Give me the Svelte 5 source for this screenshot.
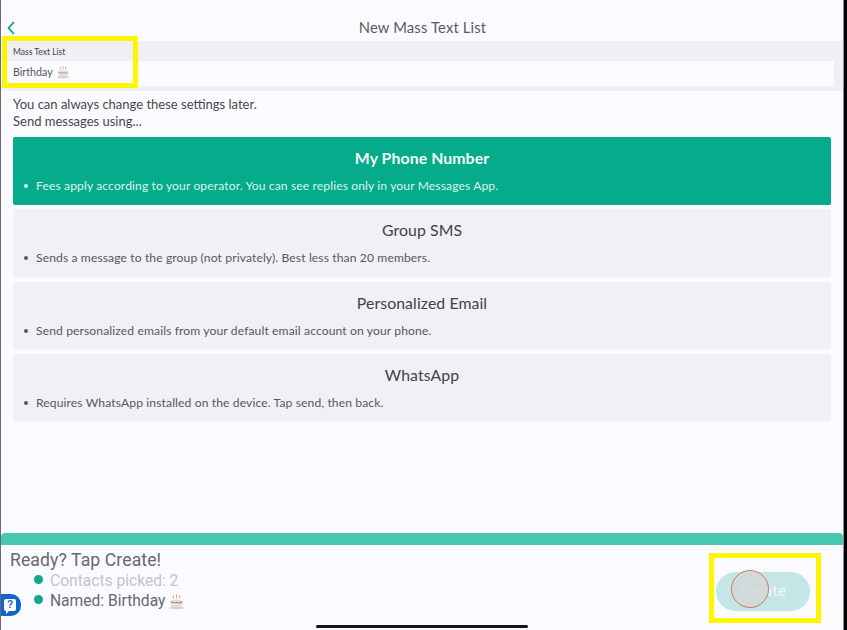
<script>
	const options = [
		{ title: 'My Phone Number', text: 'Fees apply according to your operator. You can see replies only in your Messages App.', active: true },
		{ title: 'Group SMS', text: 'Sends a message to the group (not privately). Best less than 20 members.', active: false },
		{ title: 'Personalized Email', text: 'Send personalized emails from your default email account on your phone.', active: false },
		{ title: 'WhatsApp', text: 'Requires WhatsApp installed on the device. Tap send, then back.', active: false }
	];
</script>

{#snippet cake(size)}
	<svg class="cake" width={size} height={size} viewBox="0 0 16 16" aria-hidden="true">
		<path d="M5 2v3M8 1.5V5M11 2v3" stroke="#b9a9a6" stroke-width="1" />
		<path d="M2.5 7.5c0-2 11-2 11 0V13c0 1.6-11 1.6-11 0z" fill="#eadfdc" />
		<path d="M2.5 8c1.5 2 2.5 0 3.7 1s2.2-1 3.4 0 2.4 0 3.9-1" fill="none" stroke="#a4817a" stroke-width="1" />
		<ellipse cx="8" cy="14" rx="7" ry="1.3" fill="#d6d0d4" />
	</svg>
{/snippet}

<div class="screen">
	<header class="topbar">
		<svg class="back" width="10" height="16" viewBox="0 0 10 16" aria-hidden="true">
			<path d="M8 2 2.5 8 8 14" fill="none" stroke="#0b9c84" stroke-width="1.7" />
		</svg>
		<h1>New Mass Text List</h1>
	</header>

	<div class="field">
		<div class="field-label">Mass Text List</div>
		<div class="field-input">Birthday {@render cake(14)}</div>
	</div>

	<p class="intro">You can always change these settings later.<br />Send messages using...</p>

	<div class="options">
		{#each options as option}
			<div class="option" class:active={option.active}>
				<div class="option-title">{option.title}</div>
				<div class="option-text"><span class="bullet"></span>{option.text}</div>
			</div>
		{/each}
	</div>

	<footer class="footer">
		<div class="footer-bar"></div>
		<div class="footer-body">
			<div class="summary">
				<div class="ready">Ready? Tap Create!</div>
				<div class="check done"><span class="dot"></span>Contacts picked: 2</div>
				<div class="check"><span class="dot"></span>Named: Birthday {@render cake(17)}</div>
			</div>
			<div class="create">Create</div>
		</div>
		<div class="home-indicator"></div>
	</footer>

	<div class="help"><span class="bubble">?</span></div>
	<div class="highlight highlight-name"></div>
	<div class="highlight highlight-create"></div>
	<div class="touch"></div>
</div>

<style>
	:global(body) {
		margin: 0;
		background: #fbfbff;
	}

	.screen {
		position: relative;
		display: flex;
		flex-direction: column;
		width: 847px;
		height: 630px;
		box-sizing: border-box;
		padding: 0 4px 0 1px;
		overflow: hidden;
		background: #fbfbff;
		border-left: 1px solid #6a6a70;
		box-shadow: inset -3px 0 0 #000, inset -4px 0 0 #8c8c92;
		font-family: Lato, 'Open Sans', sans-serif;
		color: #4d5257;
	}

	.topbar {
		display: flex;
		align-items: center;
		justify-content: center;
		position: relative;
		height: 41px;
		flex-shrink: 0;
		padding-top: 13px;
		box-sizing: border-box;
	}

	.topbar h1 {
		margin: 0;
		font-size: 14.8px;
		font-weight: 400;
		color: #565c60;
		letter-spacing: 0.15px;
	}

	.back {
		position: absolute;
		left: 4px;
		top: 20px;
	}

	.field {
		background: #f0f0f4;
		padding-bottom: 5px;
		margin-left: -1px;
	}

	.field-label {
		height: 20px;
		line-height: 22px;
		padding-left: 12px;
		font-size: 8.5px;
		color: #3f4347;
	}

	.field-input {
		display: flex;
		align-items: center;
		gap: 0;
		height: 25px;
		padding: 0 0 4px 12px;
		box-sizing: border-box;
		margin-right: 9px;
		background: #fbfbff;
		font-size: 10.7px;
		color: #53575b;
	}

	.intro {
		margin: 5px 0 0 11px;
		font-size: 13px;
		line-height: 17px;
		color: #45494d;
	}

	.options {
		display: flex;
		flex-direction: column;
		gap: 4.8px;
		margin: 7px 12px 0 11px;
	}

	.option {
		height: 67.5px;
		box-sizing: border-box;
		padding-top: 12px;
		background: #f0f0f5;
		border-radius: 2px;
		color: #3f4347;
	}

	.option.active {
		background: #05ab8b;
		color: #f4fbf9;
	}

	.option-title {
		height: 18px;
		line-height: 18px;
		text-align: center;
		font-size: 15.8px;
		letter-spacing: 0.1px;
	}

	.active .option-title {
		font-weight: 700;
	}

	.option-text {
		display: flex;
		align-items: center;
		margin-top: 12px;
		padding-left: 11px;
		font-size: 12.1px;
		line-height: 14px;
		letter-spacing: 0.12px;
		color: #55595d;
	}

	.active .option-text {
		color: #dcf3ed;
	}

	.bullet {
		width: 4px;
		height: 4px;
		margin-right: 8px;
		border-radius: 50%;
		background: currentColor;
	}

	.footer {
		position: relative;
		display: flex;
		flex-direction: column;
		margin-top: auto;
		margin-left: -1px;
		height: 97px;
		flex-shrink: 0;
	}

	.footer-bar {
		height: 12px;
		flex-shrink: 0;
		border-radius: 4px 4px 0 0;
		background: #47c9b0;
	}

	.footer-body {
		display: flex;
		justify-content: space-between;
		flex: 1;
		font-family: Roboto, sans-serif;
	}

	.summary {
		padding: 5px 0 0 9px;
	}

	.ready {
		font-size: 17.6px;
		line-height: 20px;
		color: #66696e;
		letter-spacing: 0.1px;
	}

	.check {
		display: flex;
		align-items: center;
		height: 20px;
		margin-left: 24px;
		font-size: 15.6px;
		color: #66696e;
	}

	.check.done {
		color: #c3c3c9;
		margin-top: 1px;
	}

	.dot {
		width: 9px;
		height: 9px;
		margin-right: 7px;
		margin-top: -3px;
		border-radius: 50%;
		background: #0fa98a;
	}

	.cake {
		flex-shrink: 0;
		margin-left: 3px;
	}

	.create {
		align-self: flex-start;
		width: 94px;
		height: 39px;
		margin: 27px 33px 0 0;
		border-radius: 20px;
		background: #c5e6e6;
		color: #eef8f8;
		font-size: 15px;
		line-height: 39px;
		text-align: center;
		letter-spacing: 0.5px;
	}

	.home-indicator {
		position: absolute;
		left: 315px;
		bottom: 2px;
		width: 212px;
		height: 3px;
		border-radius: 2px;
		background: #16161a;
	}

	.help {
		position: absolute;
		left: -1px;
		top: 594px;
		display: flex;
		align-items: center;
		width: 21px;
		height: 22px;
		padding-left: 4px;
		box-sizing: border-box;
		border-radius: 0 10px 10px 0;
		background: #1066cc;
	}

	.bubble {
		position: relative;
		width: 12px;
		height: 12px;
		border-radius: 2px;
		background: #fff;
		color: #1066cc;
		font: 700 10px/12px 'Liberation Sans', sans-serif;
		text-align: center;
	}

	.bubble::after {
		content: '';
		position: absolute;
		left: 2px;
		bottom: -3px;
		border-top: 3px solid #fff;
		border-right: 3px solid transparent;
	}

	.highlight {
		position: absolute;
		box-sizing: border-box;
		border: 5px solid #fdf600;
	}

	.highlight-name {
		left: 1px;
		top: 36px;
		width: 136px;
		height: 52px;
	}

	.highlight-create {
		left: 708px;
		top: 553px;
		width: 112px;
		height: 70px;
	}

	.touch {
		position: absolute;
		left: 730px;
		top: 570px;
		width: 38px;
		height: 38px;
		box-sizing: border-box;
		border: 1.5px solid #d2765c;
		border-radius: 50%;
		background: rgba(210, 215, 215, 0.8);
	}
</style>
